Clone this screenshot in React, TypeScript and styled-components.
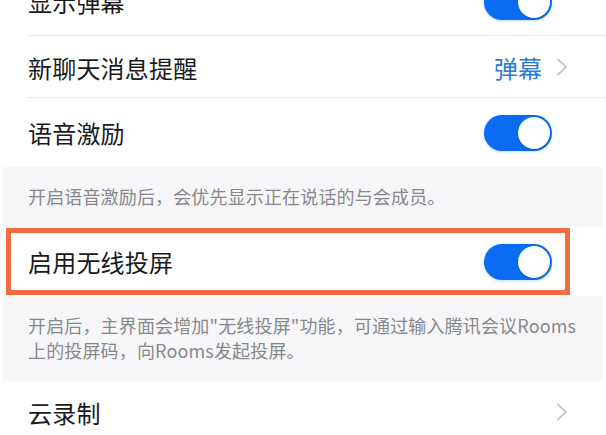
import styled, { createGlobalStyle } from 'styled-components';

const GlobalStyle = createGlobalStyle`
  body {
    margin: 0;
    background: #ffffff;
    font-family: 'Noto Sans CJK SC', 'Noto Sans', sans-serif;
  }
`;

type Item =
  | { kind: 'toggle'; label: string; on: boolean; highlight?: boolean }
  | { kind: 'link'; label: string; value?: string }
  | { kind: 'note'; lines: string[] };

const items: Item[] = [
  { kind: 'toggle', label: '显示弹幕', on: true },
  { kind: 'link', label: '新聊天消息提醒', value: '弹幕' },
  { kind: 'toggle', label: '语音激励', on: true },
  { kind: 'note', lines: ['开启语音激励后，会优先显示正在说话的与会成员。'] },
  { kind: 'toggle', label: '启用无线投屏', on: true, highlight: true },
  {
    kind: 'note',
    lines: ['开启后，主界面会增加"无线投屏"功能，可通过输入腾讯会议Rooms', '上的投屏码，向Rooms发起投屏。'],
  },
  { kind: 'link', label: '云录制' },
];

const Chevron = () => (
  <ChevronIcon viewBox='0 0 12 18' width='12' height='18'>
    <polyline points='2,1.5 10,9 2,16.5' fill='none' stroke='#c6c6c8' strokeWidth='1.8' strokeLinecap='round' strokeLinejoin='round' />
  </ChevronIcon>
);

const App = () => {
  return (
    <Page>
      <GlobalStyle />
      <Screen>
        {items.map((item, i) => {
          const next = items[i + 1];
          const divided = next !== undefined && next.kind !== 'note' && item.kind !== 'note';
          if (item.kind === 'note') {
            return (
              <Note key={i}>
                {item.lines.map((line) => (
                  <NoteLine key={line}>{line}</NoteLine>
                ))}
              </Note>
            );
          }
          if (item.kind === 'toggle') {
            return (
              <Row key={i} kind='toggle' divided={divided && !item.highlight}>
                <Label>{item.label}</Label>
                <Switch on={item.on}>
                  <Knob />
                </Switch>
                {item.highlight && <Highlight />}
              </Row>
            );
          }
          return (
            <Row key={i} kind='link' divided={divided}>
              <Label>{item.label}</Label>
              <Trail>
                {item.value && <Value>{item.value}</Value>}
                <Chevron />
              </Trail>
            </Row>
          );
        })}
      </Screen>
    </Page>
  );
};

export default App;

const Page = styled.div`
  width: 606px;
  height: 435px;
  overflow: hidden;
  background: #ffffff;
`;

const Screen = styled.div`
  display: flex;
  flex-direction: column;
  margin-top: -33px;
`;

const Row = styled.div<{ kind: 'toggle' | 'link'; divided: boolean }>`
  position: relative;
  display: flex;
  align-items: center;
  justify-content: space-between;
  flex-shrink: 0;
  box-sizing: border-box;
  height: ${({ kind }) => (kind === 'toggle' ? '69px' : '62px')};
  padding: 0 ${({ kind }) => (kind === 'toggle' ? '54px' : '38px')} 0 28px;
  background: #ffffff;

  ${({ divided }) =>
    divided &&
    `
    &::after {
      content: '';
      position: absolute;
      left: 28px;
      right: 0;
      bottom: 0;
      height: 1px;
      background: #ececee;
    }
  `}
`;

const Label = styled.span`
  font-size: 24px;
  color: #1a1a1c;
  letter-spacing: 0.2px;
`;

const Trail = styled.div`
  display: flex;
  align-items: center;
  gap: 14px;
`;

const Value = styled.span`
  font-size: 24px;
  color: #2b7ad6;
`;

const ChevronIcon = styled.svg`
  display: block;
`;

const Switch = styled.div<{ on: boolean }>`
  position: relative;
  width: 68px;
  height: 36px;
  border-radius: 18px;
  background: ${({ on }) => (on ? '#0a6cf2' : '#e5e5ea')};
  box-shadow: 0 1px 3px rgba(10, 108, 242, 0.25);
`;

const Knob = styled.div`
  position: absolute;
  top: 2px;
  right: 2px;
  width: 32px;
  height: 32px;
  border-radius: 50%;
  background: #ffffff;
  box-shadow: 0 1px 2px rgba(0, 0, 0, 0.2);
`;

const Highlight = styled.div`
  position: absolute;
  left: 6px;
  right: 36px;
  top: 1px;
  bottom: 1px;
  border: 5px solid #f36c41;
  pointer-events: none;
`;

const Note = styled.div`
  flex-shrink: 0;
  margin: 0 3px;
  padding: 17px 10px 18px 25px;
  background: #f7f7f9;
`;

const NoteLine = styled.div`
  font-size: 18px;
  line-height: 25px;
  color: #88888c;
  letter-spacing: 0.15px;
  white-space: nowrap;
`;
